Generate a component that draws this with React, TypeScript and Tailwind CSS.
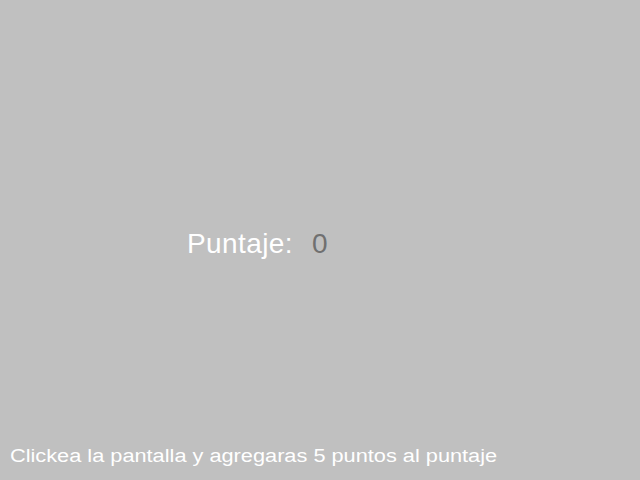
import React from "react";

export default function App() {
  return (
    <div
      className="w-[640px] h-[480px] bg-[#c0c0c0] flex flex-col overflow-hidden"
      style={{ fontFamily: '"Liberation Sans", Arial, sans-serif' }}
    >
      <div className="pt-[230px] pl-[187px] flex items-baseline text-[28px] leading-none">
        <span className="text-white tracking-[0.4px]">Puntaje:</span>
        <span className="text-[#707070] ml-[19px]">0</span>
      </div>
      <div className="mt-auto pl-[10px] pb-[15px]">
        <div className="origin-left scale-x-[1.208] text-[18px] leading-none text-white whitespace-nowrap">
          Clickea la pantalla y agregaras 5 puntos al puntaje
        </div>
      </div>
    </div>
  );
}
